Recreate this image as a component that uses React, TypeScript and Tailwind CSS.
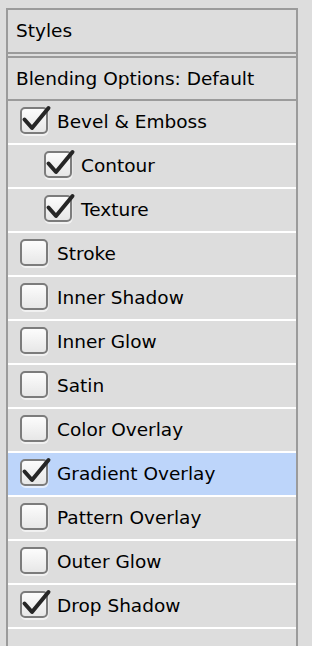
import React from 'react';

type Item = { label: string; checked: boolean; indent?: boolean; selected?: boolean };

const items: Item[] = [
  { label: 'Bevel & Emboss', checked: true },
  { label: 'Contour', checked: true, indent: true },
  { label: 'Texture', checked: true, indent: true },
  { label: 'Stroke', checked: false },
  { label: 'Inner Shadow', checked: false },
  { label: 'Inner Glow', checked: false },
  { label: 'Satin', checked: false },
  { label: 'Color Overlay', checked: false },
  { label: 'Gradient Overlay', checked: true, selected: true },
  { label: 'Pattern Overlay', checked: false },
  { label: 'Outer Glow', checked: false },
  { label: 'Drop Shadow', checked: true },
];

const CheckBox: React.FC<{ checked: boolean }> = ({ checked }) => (
  <svg width="30" height="30" viewBox="0 0 30 30" className="shrink-0 overflow-visible">
    <defs>
      <linearGradient id="boxFill" x1="0" y1="0" x2="0" y2="1">
        <stop offset="0" stopColor="#fdfdfd" />
        <stop offset="1" stopColor="#e6e6e6" />
      </linearGradient>
    </defs>
    {/* soft shadow under the box */}
    <rect x="0.5" y="2" width="28" height="27" rx="5" fill="#ffffff" opacity="0.6" />
    <rect x="1" y="1" width="26" height="25" rx="4" fill="url(#boxFill)" stroke="#7c7c7c" strokeWidth="2" />
    {checked && (
      <path
        d="M4.5 12.5 L12 21 L28.5 1"
        fill="none"
        stroke="#262626"
        strokeWidth="4"
        strokeLinecap="round"
        strokeLinejoin="round"
      />
    )}
  </svg>
);

export default function App() {
  return (
    <div
      className="w-[312px] h-[646px] bg-[#dddddd] pt-2 pl-1.5 overflow-hidden text-black"
      style={{ fontFamily: '"DejaVu Sans", Verdana, sans-serif' }}
    >
      <div className="w-[292px] h-[700px] border-2 border-b-0 border-[#9b9b9b]">
        {/* Header */}
        <div className="h-[44px] flex items-center pl-2 text-[18.5px] border-b-2 border-[#9b9b9b]">
          Styles
        </div>
        <div className="h-[2px]" />
        <div className="h-[45px] flex items-center pl-2 text-[18.5px] border-t-2 border-b-2 border-[#9b9b9b]">
          Blending Options: Default
        </div>

        {/* Effects */}
        {items.map((it) => (
          <div
            key={it.label}
            className={`h-[44px] flex items-center gap-2 border-b-2 border-white text-[18.5px] ${
              it.indent ? 'pl-[36px]' : 'pl-3'
            } ${it.selected ? 'bg-[#bdd5fa]' : ''}`}
          >
            <CheckBox checked={it.checked} />
            <span className="-ml-px">{it.label}</span>
          </div>
        ))}
      </div>
    </div>
  );
}
